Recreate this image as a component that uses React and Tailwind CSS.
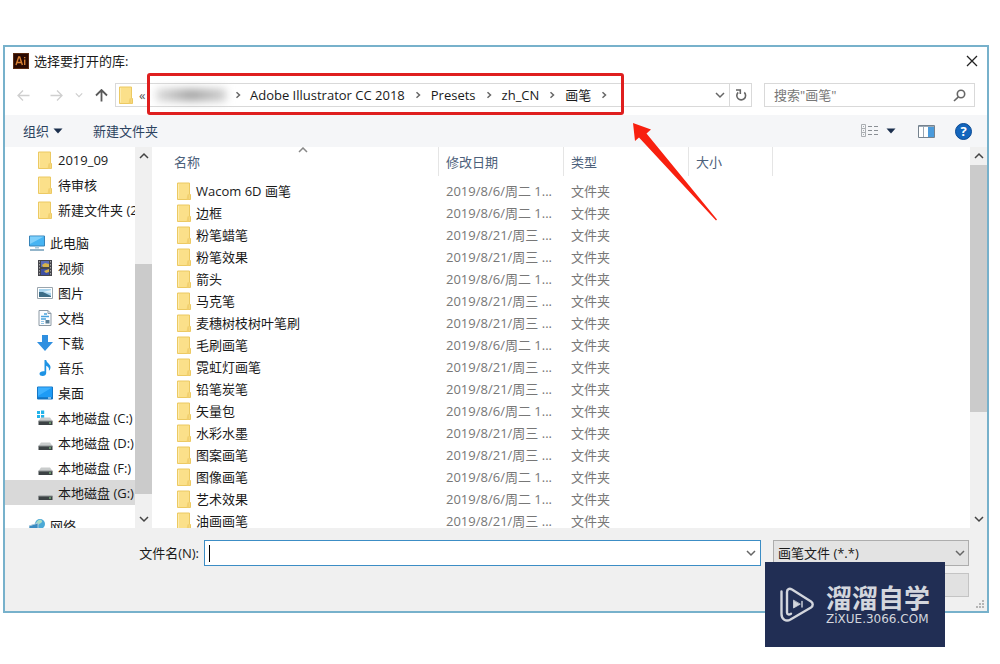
import React from 'react';

const files = [
  ['Wacom 6D 画笔', '2019/8/6/周二 1...'],
  ['边框', '2019/8/6/周二 1...'],
  ['粉笔蜡笔', '2019/8/21/周三 ...'],
  ['粉笔效果', '2019/8/21/周三 ...'],
  ['箭头', '2019/8/6/周二 1...'],
  ['马克笔', '2019/8/21/周三 ...'],
  ['麦穗树枝树叶笔刷', '2019/8/21/周三 ...'],
  ['毛刷画笔', '2019/8/6/周二 1...'],
  ['霓虹灯画笔', '2019/8/21/周三 ...'],
  ['铅笔炭笔', '2019/8/21/周三 ...'],
  ['矢量包', '2019/8/6/周二 1...'],
  ['水彩水墨', '2019/8/21/周三 ...'],
  ['图案画笔', '2019/8/21/周三 ...'],
  ['图像画笔', '2019/8/6/周二 1...'],
  ['艺术效果', '2019/8/6/周二 1...'],
  ['油画画笔', '2019/8/21/周三 ...'],
];

function Folder({ className = 'h-[18px] w-[14px]' }) {
  return (
    <svg viewBox="0 0 14 18" className={`${className} shrink-0`} aria-hidden="true">
      <path d="M.5 1h12v11.5h1V17.5H.5z" fill="#fbe08a" stroke="#ecc962" />
      <path d="M12.5 12v5.5h-3l1-5z" fill="#f2d070" />
      <path d="M1.5 2v14.5" stroke="#fdecae" />
    </svg>
  );
}

function Chevron({ dir = 'down', className = 'h-[10px] w-[10px]' }) {
  const d = {
    down: 'M1 3l4 4 4-4',
    up: 'M1 7l4-4 4 4',
    right: 'M3.5 2.2l3 2.8-3 2.8',
  }[dir];
  return (
    <svg viewBox="0 0 10 10" className={`${className} shrink-0`} fill="none" stroke="currentColor" strokeWidth="1.5" aria-hidden="true">
      <path d={d} />
    </svg>
  );
}

function Triangle() {
  return (
    <svg viewBox="0 0 10 6" className="h-[6px] w-[10px] shrink-0" aria-hidden="true">
      <path d="M.5.5h9L5 5.5z" fill="#1b2f4d" />
    </svg>
  );
}

function Drive({ windows, dark }) {
  return (
    <>
      {windows && <path d="M0 1h3v3H0zM4 .6h3.2V4H4zM0 5h3v3H0zM4 5h3.2v3.2H4z" fill="#22b3ea" />}
      {!dark && <path d="M4 7.5h9l2.5 3.5H1.5z" fill="#c9cccc" />}
      <path d="M1.5 11h14v4h-14z" fill="#3c4244" />
      <path d="M1.5 11h14" stroke="#8b9192" />
      <path d="M12 13h2" stroke="#8fe08f" />
    </>
  );
}

const glyphs = {
  pc: (
    <>
      <path d="M.5 1h15v10H.5z" fill="#46b4f3" stroke="#3683b8" />
      <path d="M1 1.5h14L1 9z" fill="#7fd0fb" />
      <path d="M6 11.5h4v2H6z" fill="#a8c9dc" />
      <path d="M1 15h14" stroke="#6f9db8" strokeWidth="1.5" />
    </>
  ),
  video: (
    <>
      <path d="M1 0h14v16H1z" fill="#45464c" />
      <path d="M4 1h8v6H4z" fill="#5a6ab8" />
      <path d="M4 9h8v6H4z" fill="#3e50a2" />
      <path d="M5 5l3-2 4 1v3H6zM7 11l5-2v3l-3 1z" fill="#d6b34a" />
      <path d="M2.5 1v15M13.5 1v15" stroke="#a5a5a5" strokeDasharray="1.5 1.5" />
    </>
  ),
  picture: (
    <>
      <path d="M.5 2.5h15v11H.5z" fill="#fff" stroke="#9aa5ad" />
      <path d="M2 4h12v8H2z" fill="#a8d4ee" />
      <path d="M2 7l4 0 8 4v1H2z" fill="#3d6d87" />
      <path d="M6 7l8-2v3z" fill="#e4f3fa" />
    </>
  ),
  doc: (
    <>
      <path d="M2 .5h9l3 3v12H2z" fill="#fbfdff" stroke="#8d9aa5" />
      <path d="M11 .5v3h3" fill="none" stroke="#8d9aa5" />
      <path d="M7 4h3M4 6.5h8M4 9h5" stroke="#4aa3dd" strokeWidth="1.4" />
      <path d="M4 11.500h3M4 13.500h3" stroke="#8fc5e8" />
      <path d="M8.500 10h4v3.500h-4z" fill="#5b7f96" />
    </>
  ),
  download: <path d="M5 0h6v7h5l-8 9-8-9h5z" fill="#2f8fe0" />,
  music: <path d="M7.500 0h1.700c.3 3 4.600 4 4.300 7.500-.1 1.500-.8 2.500-1.600 3.300.6-3-.9-4.300-2.700-5V13c0 2-1.700 3-3.500 3S2.500 15 2.500 13.700c0-1.700 2.500-3 5-2.400z" fill="#1e93e4" />,
  desktop: (
    <>
      <path d="M.5 2h15v12H.5z" fill="#1d9bf6" stroke="#1577c5" />
      <path d="M1 2.500h14L1 11z" fill="#3cb0ff" />
      <path d="M1 13h14" stroke="#0d5ea6" />
      <path d="M11 13h3" stroke="#e4f5ff" />
    </>
  ),
  driveC: <Drive windows />,
  drive: <Drive />,
  driveDark: <Drive dark />,
  network: (
    <>
      <circle cx="11" cy="6" r="5" fill="#4ba9d6" />
      <path d="M7 5c2-4 5-4 6-2s-3 2-3 4z" fill="#a8dcc5" />
      <path d="M0 8l9-3v8l-9 1z" fill="#3b8cc2" stroke="#a9c9dc" />
    </>
  ),
};

const groups = [
  {
    items: [
      { icon: 'folder', label: '2019_09' },
      { icon: 'folder', label: '待审核' },
      { icon: 'folder', label: '新建文件夹 (2)' },
    ],
  },
  {
    items: [
      { icon: 'pc', label: '此电脑', root: true },
      { icon: 'video', label: '视频' },
      { icon: 'picture', label: '图片' },
      { icon: 'doc', label: '文档' },
      { icon: 'download', label: '下载' },
      { icon: 'music', label: '音乐' },
      { icon: 'desktop', label: '桌面' },
      { icon: 'driveC', label: '本地磁盘 (C:)' },
      { icon: 'drive', label: '本地磁盘 (D:)' },
      { icon: 'drive', label: '本地磁盘 (F:)' },
      { icon: 'driveDark', label: '本地磁盘 (G:)', selected: true },
    ],
  },
  { items: [{ icon: 'network', label: '网络', root: true }] },
];

function NavItem({ icon, label, root, selected }) {
  return (
    <li>
      <a
        href="#"
        className={`flex h-[25px] items-center gap-[5px] whitespace-nowrap ${root ? 'pl-6' : 'pl-8'} ${selected ? 'bg-[#d9d9d9]' : ''}`}
      >
        <span className="flex w-4 shrink-0 justify-center">
          {icon === 'folder' ? (
            <Folder />
          ) : (
            <svg viewBox="0 0 16 16" className="h-4 w-4" aria-hidden="true">
              {glyphs[icon]}
            </svg>
          )}
        </span>
        {label}
      </a>
    </li>
  );
}

function Scrollbar({ before, thumb }) {
  return (
    <div className="flex w-[17px] shrink-0 flex-col bg-[#f0f0f0] text-[#444]">
      <button aria-label="向上滚动" className="flex h-[18px] items-center justify-center">
        <Chevron dir="up" />
      </button>
      <div className="flex flex-1 flex-col">
        <div className={before} />
        <div className={`${thumb} bg-[#cbcbcb]`} />
      </div>
      <button aria-label="向下滚动" className="flex h-[18px] items-center justify-center">
        <Chevron />
      </button>
    </div>
  );
}

function Crumb({ children }) {
  return (
    <>
      <a href="#" className="whitespace-nowrap">{children}</a>
      <span className="flex w-[26px] shrink-0 justify-center text-[#666]">
        <Chevron dir="right" />
      </span>
    </>
  );
}

function Arrow({ dir, className }) {
  const d = { left: 'M12.500 6.500H1M6 1.500l-5 5 5 5', right: 'M.5 6.500H12M7 1.500l5 5-5 5', up: 'M6.500 12.500V1M1 6.500l5.500-5.500 5.500 5.500' }[dir];
  return (
    <svg viewBox="0 0 13 13" className={`h-[13px] w-[13px] ${className || ''}`} fill="none" stroke="currentColor" aria-hidden="true">
      <path d={d} strokeWidth={dir === 'up' ? 1.8 : 1.3} />
    </svg>
  );
}

function Header() {
  return (
    <>
      <header className="flex h-7 items-center gap-[5px] pl-2 pr-[9px]">
        <svg viewBox="0 0 16 16" className="h-4 w-4" role="img" aria-label="Illustrator">
          <rect width="16" height="16" fill="#2a0a02" />
          <rect x=".5" y=".5" width="15" height="15" fill="none" stroke="#5a2a10" />
          <path d="M3 12L5.700 4h1L9.400 12M4 9.500h4.400M11.700 6.500V12M11.700 4v1.300" stroke="#d98032" strokeWidth="1.400" fill="none" />
        </svg>
        <h1 className="flex-1">选择要打开的库:</h1>
        <button aria-label="关闭">
          <svg viewBox="0 0 12 12" className="h-3 w-3" stroke="#222" strokeWidth="1.300" aria-hidden="true">
            <path d="M1 1l10 10M11 1L1 11" />
          </svg>
        </button>
      </header>
      <div className="flex h-10 items-center px-3">
        <nav className="mr-[7px] flex shrink-0 items-center" aria-label="导航">
          <button aria-label="后退" className="mr-5 text-[#cfcfcf]"><Arrow dir="left" /></button>
          <button aria-label="前进" className="mr-3 text-[#cfcfcf]"><Arrow dir="right" /></button>
          <button aria-label="最近位置" className="mr-3 text-[#cfcfcf]"><Chevron className="h-2 w-2" /></button>
          <button aria-label="上移" className="text-[#5a5a5a]"><Arrow dir="up" /></button>
        </nav>
        <div className="flex h-6 min-w-0 flex-1 items-center border border-[#d9d9d9] pl-[3px]">
          <Folder />
          <span className="ml-1.5 flex w-[17px] shrink-0 text-[#555]">«</span>
          <span className="h-3 w-[70px] shrink-0 bg-linear-to-r from-[#dcdcdc] via-[#a2a2a2] to-[#cfcfcf] blur-[4px]" />
          <span className="flex w-6 shrink-0 justify-center text-[#666]">
            <Chevron dir="right" />
          </span>
          <Crumb>Adobe Illustrator CC 2018</Crumb>
          <Crumb>Presets</Crumb>
          <Crumb>zh_CN</Crumb>
          <Crumb>画笔</Crumb>
          <button aria-label="历史" className="ml-auto mr-1 text-[#666]"><Chevron /></button>
          <button aria-label="刷新" className="flex h-full w-[22px] items-center justify-center border-l border-[#d9d9d9]">
            <svg viewBox="0 0 12 12" className="h-3 w-3" fill="none" stroke="#666" strokeWidth="1.600" aria-hidden="true">
              <path d="M9.300 3.400A4.400 4.400 0 1 1 3.200 3.300M1 1h4.300v4" />
            </svg>
          </button>
        </div>
        <label className="ml-3 flex h-6 w-[211px] shrink-0 items-center border border-[#d9d9d9] pl-[9px] pr-2">
          <input aria-label="搜索" placeholder={'搜索"画笔"'} className="min-w-0 flex-1 outline-none placeholder:text-[#777]" />
          <svg viewBox="0 0 13 13" className="h-[13px] w-[13px]" fill="none" stroke="#666" strokeWidth="1.600" aria-hidden="true">
            <circle cx="8" cy="5" r="3.700" />
            <path d="M5.400 7.800L1 12" />
          </svg>
        </label>
      </div>
      <div className="flex h-8 items-center bg-[#f5f6f8] pl-[18px] pr-[15px] text-[#2c4360]">
        <button className="flex items-center gap-1">组织 <Triangle /></button>
        <button className="ml-[30px]">新建文件夹</button>
        <button aria-label="更改视图" className="ml-auto flex items-center gap-2">
          <svg viewBox="0 0 18 14" className="h-[14px] w-[18px]" fill="none" stroke="#8a8f94" aria-hidden="true">
            <path d="M1.500 .5h4v4h-4zM1.500 4.500h4v4h-4zM1.500 8.500h4v4h-4z" stroke="#a9adb1" />
            <path d="M3 2.500h1M3 6.500h1M3 10.500h1" stroke="#a9adb1" />
            <path d="M8 2.500h4M14 2.500h4M8 6.500h4M14 6.500h4M8 10.500h4M14 10.500h4" />
          </svg>
          <Triangle />
        </button>
        <button aria-label="预览窗格" className="ml-[22px]">
          <svg viewBox="0 0 17 13" className="h-[13px] w-[17px]" aria-hidden="true">
            <path d="M.5.5h16v12H.5z" fill="#fff" stroke="#75828e" />
            <path d="M1 1.500h15M5.500 1v11" stroke="#9aa8b5" />
            <path d="M10 2h6v10h-6z" fill="#4a9bdc" />
          </svg>
        </button>
        <button aria-label="帮助" className="ml-5 flex h-[17px] w-[17px] items-center justify-center rounded-full border border-[#0a4a94] bg-[#1466bd] text-[13px] font-bold leading-none text-white">
          ?
        </button>
      </div>
    </>
  );
}

function FileTable() {
  const head = 'border-r border-[#e5e5e5] pl-[7px] text-left font-normal';
  return (
    <div className="min-w-0 flex-1 overflow-hidden">
      <table className="w-full table-fixed border-separate border-spacing-0 whitespace-nowrap">
        <colgroup>
          <col className="w-[287px]" />
          <col className="w-[125px]" />
          <col className="w-[125px]" />
          <col className="w-[84px]" />
          <col />
        </colgroup>
        <thead>
          <tr className="h-[29px] text-[#4c607a]">
            <th className="border-r border-[#e5e5e5] pl-[22px] text-left font-normal">
              <span className="relative block">
                名称
                <Chevron dir="up" className="absolute -top-2 left-[124px] h-[10px] w-[10px] text-[#888]" />
              </span>
            </th>
            <th className={head}>修改日期</th>
            <th className={head}>类型</th>
            <th className={head}>大小</th>
            <th />
          </tr>
        </thead>
        <tbody>
          <tr className="h-1"><td colSpan={5} /></tr>
          {files.map(([name, date]) => (
            <tr key={name} className="h-[22px] text-[#777]">
              <td className="pl-[25px] text-[#1a1a1a]">
                <span className="flex items-center gap-[5px]"><Folder />{name}</span>
              </td>
              <td className="pl-[7px]">{date}</td>
              <td className="pl-[7px]">文件夹</td>
              <td />
              <td />
            </tr>
          ))}
        </tbody>
      </table>
    </div>
  );
}

function Footer() {
  return (
    <footer className="bg-[#f0f0f0] pl-4 pr-[18px] pt-3">
      <div className="flex items-center">
        <label htmlFor="filename" className="w-[183px] shrink-0 pr-[5px] text-right">文件名(N):</label>
        <div className="flex h-[26px] min-w-0 flex-1 items-center border border-[#3c8dc5] bg-white px-1">
          <span className="h-[17px] w-px bg-black" />
          <input id="filename" className="min-w-0 flex-1 pl-1 outline-none" />
          <button aria-label="文件名历史" className="text-[#666]"><Chevron /></button>
        </div>
        <div className="relative ml-3 w-[196px] shrink-0">
          <select aria-label="文件类型" className="block h-[26px] w-full appearance-none border border-[#adadad] bg-[#e3e3e3] pl-1">
            <option>画笔文件 (*.*)</option>
          </select>
          <Chevron className="pointer-events-none absolute right-1 top-2 h-[10px] w-[10px] text-[#666]" />
        </div>
      </div>
      <div className="mt-[7px] flex justify-end gap-2">
        <button aria-label="打开" className="h-6 w-[94px] border border-[#c4c4c4] bg-[#e1e1e1]" />
        <button aria-label="取消" className="h-6 w-[94px] border border-[#c4c4c4] bg-[#e1e1e1]" />
      </div>
      <div className="-mr-4 flex h-[14px] items-end justify-end pb-0.5">
        <svg viewBox="0 0 10 10" className="h-[10px] w-[10px]" fill="#b5b5b5" aria-hidden="true">
          <path d="M7 1h2v2H7zM4 4h2v2H4zM7 4h2v2H7zM1 7h2v2H1zM4 7h2v2H4zM7 7h2v2H7z" />
        </svg>
      </div>
    </footer>
  );
}

function Watermark() {
  return (
    <div className="absolute right-[55px] top-[562px] flex h-[85px] w-[180px] items-center gap-3 bg-[#212e54] pl-[15px] text-[#d3d6dd]">
      <svg viewBox="0 0 34 36" className="h-9 w-[34px] shrink-0" fill="none" stroke="currentColor" strokeWidth="2.400" strokeLinecap="round" strokeLinejoin="round" aria-hidden="true">
        <path d="M1.500 4.500V27c0 5.500 4.500 8 9 5.500l20.500-12c2.300-1.500 2.300-4.500 0-6L12 2.500C9.300 1 7 2 7 5v20.500c0 2 2 2.500 4 1.200" />
        <path d="M13.500 13.500v7.500l6.500-3.700z" fill="currentColor" strokeWidth=".8" />
        <path d="M22 14.500v5.500" strokeWidth="1.400" />
      </svg>
      <div className="whitespace-nowrap">
        <p className="text-[26px] font-bold leading-7">溜溜自学</p>
        <p className="font-['DejaVu_Sans',sans-serif] text-[12px] leading-[14px]">ZiXUE.3066.COM</p>
      </div>
    </div>
  );
}

export default function App() {
  return (
    <main className="relative min-h-screen bg-white pb-[51px] pl-[3px] pr-[11px] pt-[45px] font-['Open_Sans','Noto_Sans_CJK_SC',sans-serif] text-[13px] leading-[18px] text-[#1a1a1a]">
      <section className="border-2 border-[#77b1cb] bg-white" role="dialog" aria-label="选择要打开的库">
        <Header />
        <div className="flex h-[381px] overflow-hidden">
          <nav className="w-[130px] shrink-0 overflow-hidden" aria-label="文件夹">
            <div className="flex flex-col gap-2">
              {groups.map((group, i) => (
                <ul key={i}>
                  {group.items.map((item) => <NavItem key={item.label} {...item} />)}
                </ul>
              ))}
            </div>
          </nav>
          <Scrollbar before="h-[99px]" thumb="h-[230px]" />
          <FileTable />
          <Scrollbar before="h-0" thumb="h-[247px]" />
        </div>
        <Footer />
      </section>
      <div className="pointer-events-none absolute left-[147px] top-[73px] h-[42px] w-[477px] rounded-[3px] border-3 border-[#df1f1f]" />
      <svg viewBox="0 0 86 99" className="pointer-events-none absolute left-[632px] top-[122px] h-[99px] w-[86px]" aria-hidden="true">
        <path d="M1 1l18 6.500-4.500 4L85 97.500l-1 1L7 15.500 3 19z" fill="#f8200f" />
      </svg>
      <Watermark />
    </main>
  );
}
